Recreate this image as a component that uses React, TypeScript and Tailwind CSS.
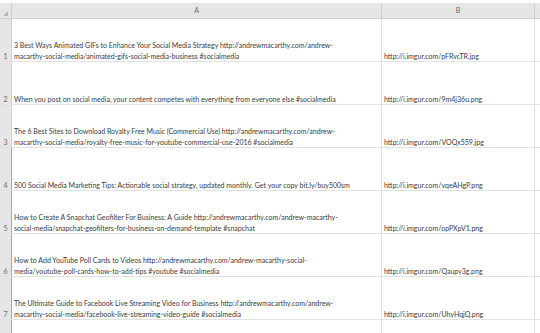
import React from 'react';

const rows: { a: string[]; b: string }[] = [
  {
    a: [
      '3 Best Ways Animated GIFs to Enhance Your Social Media Strategy http://andrewmacarthy.com/andrew-',
      'macarthy-social-media/animated-gifs-social-media-business #socialmedia',
    ],
    b: 'http://i.imgur.com/pFRvcTR.jpg',
  },
  {
    a: ['When you post on social media, your content competes with everything from everyone else #socialmedia'],
    b: 'http://i.imgur.com/9m4j36u.png',
  },
  {
    a: [
      'The 6 Best Sites to Download Royalty Free Music (Commercial Use) http://andrewmacarthy.com/andrew-',
      'macarthy-social-media/royalty-free-music-for-youtube-commercial-use-2016 #socialmedia',
    ],
    b: 'http://i.imgur.com/VOQx559.jpg',
  },
  {
    a: ['500 Social Media Marketing Tips: Actionable social strategy, updated monthly. Get your copy bit.ly/buy500sm'],
    b: 'http://i.imgur.com/vqeAHgP.png',
  },
  {
    a: [
      'How to Create A Snapchat Geofilter For Business: A Guide http://andrewmacarthy.com/andrew-macarthy-',
      'social-media/snapchat-geofilters-for-business-on-demand-template #snapchat',
    ],
    b: 'http://i.imgur.com/opPXpV1.png',
  },
  {
    a: [
      'How to Add YouTube Poll Cards to Videos http://andrewmacarthy.com/andrew-macarthy-social-',
      'media/youtube-poll-cards-how-to-add-tips #youtube #socialmedia',
    ],
    b: 'http://i.imgur.com/Qaupy3g.png',
  },
  {
    a: [
      'The Ultimate Guide to Facebook Live Streaming Video for Business http://andrewmacarthy.com/andrew-',
      'macarthy-social-media/facebook-live-streaming-video-guide #socialmedia',
    ],
    b: 'http://i.imgur.com/UhyHqjQ.png',
  },
];

export default function App() {
  return (
    <div className="w-[540px] h-[333px] overflow-hidden bg-white font-['Lato',sans-serif] text-[7px] text-[#3b3b3b]">
      {/* top strip */}
      <div className="h-[3px] bg-white" />

      {/* column headers */}
      <div className="grid grid-cols-[12px_370px_153px_5px] h-[16px] bg-[#e6e6e6] border-b border-[#d0d0d0] text-[#6a6a6a]">
        <div className="relative border-r border-[#d0d0d0]">
          <div className="absolute right-[3px] bottom-[2px] w-0 h-0 border-l-[5px] border-l-transparent border-b-[5px] border-b-[#b8b8b8]" />
        </div>
        <div className="flex items-center justify-center border-r border-[#d0d0d0]">A</div>
        <div className="flex items-center justify-center border-r border-[#d0d0d0]">B</div>
        <div />
      </div>

      {/* rows */}
      {rows.map((row, i) => (
        <div
          key={i}
          className="grid grid-cols-[12px_370px_153px_5px] h-[43px] border-b border-[#e1e1e1]"
        >
          <div className={`flex items-end justify-center bg-[#e6e6e6] text-[#6a6a6a] border-r ${i >= 3 ? 'border-[#a8a8a8]' : 'border-[#d0d0d0]'}`}>
            <span className="leading-[11px] translate-y-[1px]">{i + 1}</span>
          </div>
          <div className="flex flex-col justify-end pl-[2px] leading-[11px] whitespace-nowrap border-r border-[#e1e1e1] overflow-hidden">
            {row.a.map((line, j) => (
              <div key={j} className="translate-y-[1px]">{line}</div>
            ))}
          </div>
          <div className="flex items-end pl-[2px] leading-[11px] whitespace-nowrap border-r border-[#e1e1e1] overflow-hidden">
            <span className="translate-y-[1px]">{row.b}</span>
          </div>
          <div />
        </div>
      ))}

      <div className="grid grid-cols-[12px_370px_153px_5px] h-[20px]">
        <div className="bg-[#e6e6e6] border-r border-[#a8a8a8]" />
        <div className="border-r border-[#e1e1e1]" />
        <div className="border-r border-[#e1e1e1]" />
        <div />
      </div>
    </div>
  );
}
